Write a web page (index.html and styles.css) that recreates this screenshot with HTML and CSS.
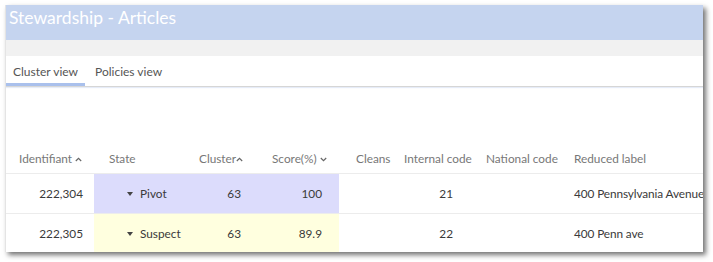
FILE: index.html
```html
<!DOCTYPE html>
<html>
<head>
<meta charset="utf-8">
<link rel="stylesheet" href="styles.css">
</head>
<body>
<div class="panel">
  <div class="title-bar">Stewardship - Articles</div>
  <div class="band"></div>
  <div class="tabs">
    <div class="tab active">Cluster view</div>
    <div class="tab">Policies view</div>
  </div>
  <div class="spacer"></div>
  <table class="grid">
    <colgroup>
      <col class="c-id"><col class="c-state"><col class="c-cluster"><col class="c-score">
      <col class="c-cleans"><col class="c-internal"><col class="c-national"><col class="c-label">
    </colgroup>
    <thead>
      <tr>
        <th class="h-id">Identifiant <svg class="sort" width="7" height="5" viewBox="0 0 7 5"><path d="M0.8 4 L3.5 1.3 L6.2 4" fill="none" stroke="#666" stroke-width="1.2"/></svg></th>
        <th class="h-state">State</th>
        <th class="h-cluster">Cluster<svg class="sort" width="7" height="5" viewBox="0 0 7 5"><path d="M0.8 4 L3.5 1.3 L6.2 4" fill="none" stroke="#666" stroke-width="1.2"/></svg></th>
        <th class="h-score">Score(%) <svg class="sort" width="7" height="5" viewBox="0 0 7 5"><path d="M0.8 1 L3.5 3.7 L6.2 1" fill="none" stroke="#666" stroke-width="1.2"/></svg></th>
        <th class="h-cleans">Cleans</th>
        <th class="h-internal">Internal code</th>
        <th class="h-national">National code</th>
        <th class="h-label">Reduced label</th>
      </tr>
    </thead>
    <tbody>
      <tr>
        <td class="num id">222,304</td>
        <td class="pivot state"><span class="caret"></span>Pivot</td>
        <td class="pivot num">63</td>
        <td class="pivot num">100</td>
        <td></td>
        <td class="num">21</td>
        <td></td>
        <td class="label">400 Pennsylvania Avenue</td>
      </tr>
      <tr>
        <td class="num id">222,305</td>
        <td class="suspect state"><span class="caret"></span>Suspect</td>
        <td class="suspect num">63</td>
        <td class="suspect num">89.9</td>
        <td></td>
        <td class="num">22</td>
        <td></td>
        <td class="label">400 Penn ave</td>
      </tr>
    </tbody>
  </table>
</div>
</body>
</html>
```
FILE: styles.css
```css
html, body {
  margin: 0;
  padding: 0;
  background: #ffffff;
}
body {
  padding: 5px 10px 10px 5px;
  font-family: Lato, "Open Sans", sans-serif;
}
.panel {
  width: 698px;
  height: 247px;
  background: #ffffff;
  box-shadow: 3px 3px 5px rgba(0,0,0,0.55);
  border-left: 1px solid #e4e4e4;
  box-sizing: border-box;
  overflow: hidden;
}
.title-bar {
  height: 35px;
  background: #c5d4ef;
  color: #ffffff;
  font-size: 17.5px;
  padding: 2px 0 0 3px;
  box-sizing: border-box;
  line-height: 22px;
}
.band {
  height: 16px;
  background: #f1f1f1;
}
.tabs {
  display: flex;
  height: 31px;
  border-bottom: 1px solid #d6d6d6;
  box-shadow: 0 1px 1px #e6ecf8;
  box-sizing: border-box;
}
.tab {
  font-size: 12px;
  color: #555;
  padding: 8px 0 0 0;
  box-sizing: border-box;
  white-space: nowrap;
}
.tab.active {
  border-bottom: 3px solid #a9c0ec;
  width: 79px;
  padding-left: 7px;
}
.tab + .tab {
  padding-left: 10px;
}
.spacer {
  height: 56px;
}
.grid {
  border-collapse: collapse;
  table-layout: fixed;
  width: 697px;
  font-size: 11.8px;
  color: #3a3a3a;
}
.c-id { width: 88px; }
.c-state { width: 97px; }
.c-cluster { width: 67px; }
.c-score { width: 81px; }
.c-cleans { width: 50px; }
.c-internal { width: 81px; }
.c-national { width: 88px; }
.c-label { width: 145px; }
.grid th {
  font-weight: normal;
  color: #777;
  height: 30px;
  padding: 0 0 0 13px;
  text-align: left;
  white-space: nowrap;
  border-bottom: 1px solid #ececec;
  vertical-align: middle;
}
.grid th.h-state { padding-left: 15px; }
.grid th.h-cluster { padding-left: 8px; }
.grid th.h-score { padding-left: 14px; }
.grid th.h-cleans { padding-left: 17px; }
.grid th.h-internal { padding-left: 15px; }
.grid th.h-national { padding-left: 16px; }
.grid th.h-label { padding-left: 16px; }
.sort {
  vertical-align: 1px;
}
.grid td {
  height: 39px;
  border-bottom: 1px solid #ececec;
  padding: 0;
  white-space: nowrap;
  vertical-align: middle;
}
.grid tbody tr:last-child td { border-bottom: none; }
.num { text-align: right; padding-right: 17px !important; }
.num.id { padding-right: 11px !important; }
.label { padding-left: 16px !important; letter-spacing: -0.1px; }
.state { padding-left: 33px !important; }
.pivot { background: #dcdcfc; }
.suspect { background: #ffffdf; }
.caret {
  display: inline-block;
  width: 0;
  height: 0;
  border-left: 3.5px solid transparent;
  border-right: 3.5px solid transparent;
  border-top: 4px solid #444;
  margin-right: 7px;
  vertical-align: 2px;
}
```
